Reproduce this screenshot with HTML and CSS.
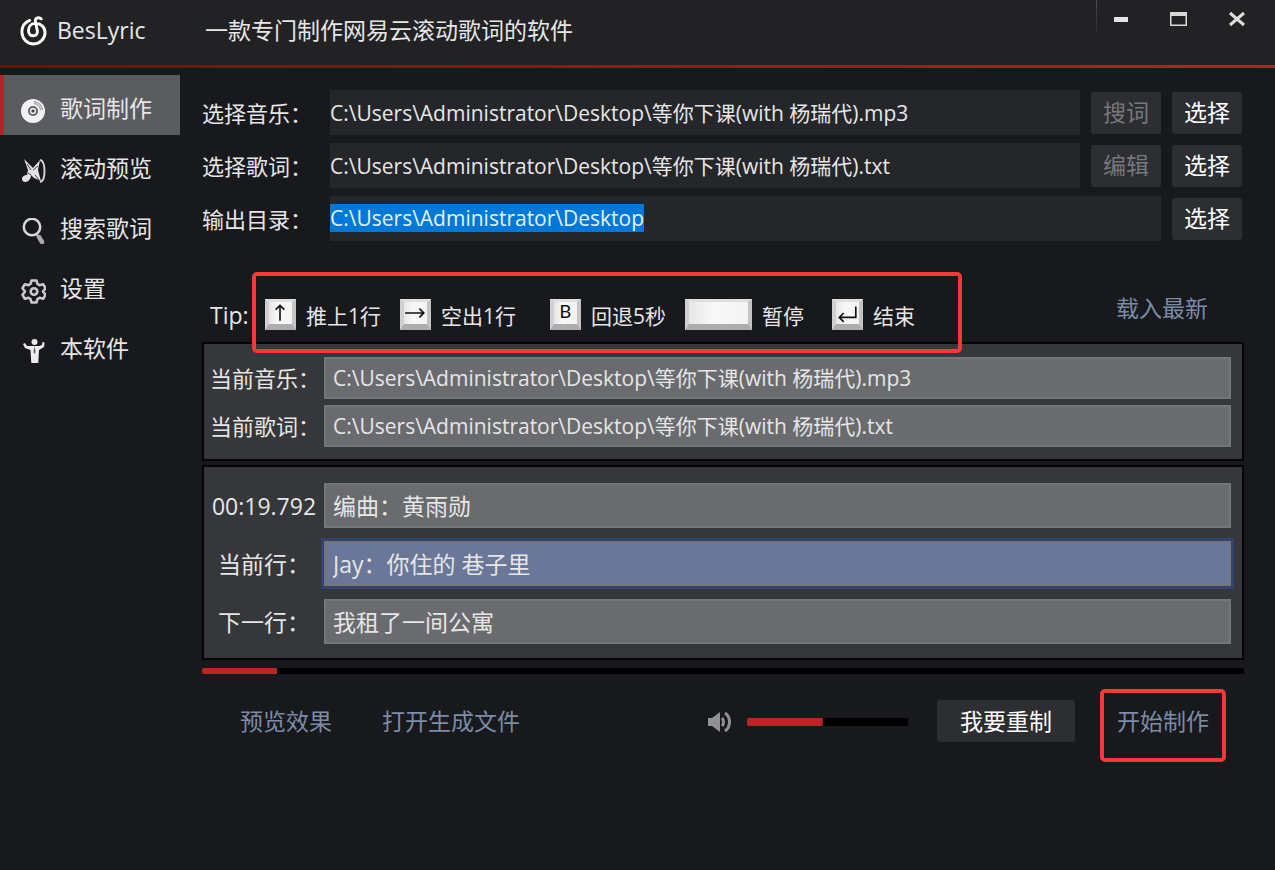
FILE: index.html
```html
<!DOCTYPE html>
<html lang="zh-CN">
<head>
    <meta charset="UTF-8">
    <meta name="viewport" content="width=device-width, initial-scale=1.0">
    <title>BesLyric</title>
    <link rel="stylesheet" href="styles.css">
</head>
<body>
    <header class="titlebar">
        <svg class="logo" viewBox="0 0 28 32" fill="none" stroke="#fff" stroke-width="3" stroke-linecap="round">
            <path d="M10 5.500C5 7.500 2 12 2 17.500C2 24.500 7.500 30 14 30S26 24.500 26 18C26 12.500 21.500 8.500 16 8.500C11.500 8.500 8.800 12 8.800 16C8.800 19.500 11 21.500 13.700 21.500C16.500 21.500 18.500 19.500 18 16.500L16 6.500C15.500 3.500 18.500 1.500 22 4"/>
        </svg>
        <h1>BesLyric</h1>
        <p class="slogan">一款专门制作网易云滚动歌词的软件</p>
        <div class="window-buttons">
            <button aria-label="最小化"><svg viewBox="0 0 18 18"><path d="M2 7h14v5H2z" fill="#e4e4e4"/></svg></button>
            <button aria-label="最大化"><svg viewBox="0 0 18 18"><path d="M0 2h17v14H0zM1.500 6v8.500h14V6z" fill="#d8d8d8" fill-rule="evenodd"/></svg></button>
            <button aria-label="关闭"><svg viewBox="0 0 18 18"><path d="M2 3l14 12M16 3L2 15" stroke="#dcdcdc" stroke-width="3"/></svg></button>
        </div>
    </header>

    <div class="layout">
        <nav class="sidebar">
            <a href="#make" class="active">
                <svg viewBox="0 0 26 26"><circle cx="13" cy="13" r="12" fill="#f1f1f1"/><circle cx="13" cy="13" r="5" fill="#5b5c5f"/><circle cx="13" cy="13" r="3.200" fill="#e4e4e4"/><circle cx="13" cy="13" r="1.600" fill="#444"/><path d="M14 5.500a7.500 7.500 0 0 1 6.500 6.500M14 3.500a9.500 9.500 0 0 1 8.500 8.500" fill="none" stroke="#858689"/></svg>
                <span>歌词制作</span>
            </a>
            <a href="#preview">
                <svg viewBox="0 0 26 26"><path d="M4 1l6 6 3 3 7-8-2 10 3 11-7-3-3-3c0 8-9 9-9 4 0-3 3-4 5-4l1-5z" fill="#e2e2e2"/><path d="M20 2c6 1 6 21 0 22" fill="none" stroke="#d0d0d0" stroke-width="2"/><path d="M7 6l4 6M18 8l-5 4M15 17l4 5M8 15l3 2" stroke="#404145"/></svg>
                <span>滚动预览</span>
            </a>
            <a href="#search">
                <svg viewBox="0 0 26 26" fill="none" stroke-linecap="round"><circle cx="12" cy="9" r="8.200" stroke="#d8d8d8" stroke-width="2.500"/><path d="M16 16l2 2" stroke="#ccc" stroke-width="2"/><path d="M19 19l3 5" stroke="#aaa" stroke-width="4.500"/></svg>
                <span>搜索歌词</span>
            </a>
            <a href="#settings">
                <svg viewBox="0 0 26 26" fill="none" stroke="#c9cacc" stroke-width="2.600" stroke-linejoin="round"><path d="M11.500 2.500h5l1 3.500 2 1.200 3.600-1 2.400 4-2.500 3.300 2.500 3.300-2.400 4-3.600-1-2 1.200-1 3.500h-5l-1-3.500-2-1.200-3.600 1-2.400-4L5 13.500l-2.500-3.300 2.400-4 3.600 1 2-1.200z"/><circle cx="14" cy="13.500" r="3.300"/></svg>
                <span>设置</span>
            </a>
            <a href="#about">
                <svg viewBox="0 0 26 26" fill="#ececec"><circle cx="14.500" cy="4" r="3"/><path d="M10 8h9l3-1 .5-3 2 .5L24 9l-5 3-.7 13h-7L10.500 12 5 10 3 6l2-1 2 3z"/><path d="M14.500 8l-1 6 1 2 1-2z" fill="#55565a"/></svg>
                <span>本软件</span>
            </a>
        </nav>

        <main>
            <form class="files">
                <div class="file-row">
                    <label for="music">选择音乐：</label>
                    <input type="text" id="music" value="C:\Users\Administrator\Desktop\等你下课(with 杨瑞代).mp3">
                    <button type="button" disabled>搜词</button>
                    <button type="button">选择</button>
                </div>
                <div class="file-row">
                    <label for="lyric">选择歌词：</label>
                    <input type="text" id="lyric" value="C:\Users\Administrator\Desktop\等你下课(with 杨瑞代).txt">
                    <button type="button" disabled>编辑</button>
                    <button type="button">选择</button>
                </div>
                <div class="file-row">
                    <label for="output">输出目录：</label>
                    <input type="text" id="output" value="C:\Users\Administrator\Desktop">
                    <button type="button">选择</button>
                </div>
            </form>

            <div class="tips">
                <span class="tip-title">Tip:</span>
                <div class="keys">
                    <kbd><svg viewBox="0 0 20 20"><path d="M10 17V3M6 7l4-4 4 4"/></svg></kbd><span>推上1行</span>
                    <kbd><svg viewBox="0 0 20 20"><path d="M1 10h17M14 6l4 4-4 4"/></svg></kbd><span class="wide">空出1行</span>
                    <kbd>B</kbd><span>回退5秒</span>
                    <kbd class="space"></kbd><span class="medium">暂停</span>
                    <kbd><svg viewBox="0 0 20 20"><path d="M18 4v10H3M7 10l-4 4 4 4"/></svg></kbd><span>结束</span>
                </div>
                <a href="#latest" class="load-latest">载入最新</a>
            </div>

            <section class="panel current-files">
                <label for="curMusic">当前音乐：</label>
                <input type="text" id="curMusic" value="C:\Users\Administrator\Desktop\等你下课(with 杨瑞代).mp3" readonly>
                <label for="curLyric">当前歌词：</label>
                <input type="text" id="curLyric" value="C:\Users\Administrator\Desktop\等你下课(with 杨瑞代).txt" readonly>
            </section>

            <section class="panel lines">
                <label for="lastLine">00:19.792</label>
                <input type="text" id="lastLine" value="编曲：黄雨勋" readonly>
                <label for="curLine">当前行：</label>
                <input type="text" id="curLine" class="current" value="Jay：你住的 巷子里" readonly>
                <label for="nextLine">下一行：</label>
                <input type="text" id="nextLine" value="我租了一间公寓" readonly>
            </section>

            <input type="range" class="slider progress" aria-label="播放进度" min="0" max="1000" value="72" style="--value: 7.2%">

            <div class="controls">
                <a href="#effect">预览效果</a>
                <a href="#open">打开生成文件</a>
                <div class="volume">
                    <svg viewBox="0 0 26 22"><path d="M1 7h4l8-6v20l-8-6H1z" fill="#909193"/><path d="M15 7c2 2 2 6 0 8M18 2c6 4 6 14 0 18" fill="none" stroke="#909193" stroke-width="3"/></svg>
                    <input type="range" class="slider" aria-label="音量" min="0" max="100" value="47" style="--value: 47%">
                </div>
                <button type="button">我要重制</button>
                <a href="#start" class="start">开始制作</a>
            </div>
        </main>
    </div>

    <script>
        const output = document.getElementById('output');
        output.focus();
        output.select();

        document.querySelectorAll('.slider').forEach(function (slider) {
            slider.addEventListener('input', function () {
                slider.style.setProperty('--value', slider.value / slider.max * 100 + '%');
            });
        });
    </script>
</body>
</html>
```
FILE: styles.css
```css
* {
    box-sizing: border-box;
    margin: 0;
    padding: 0;
}
body {
    min-height: 100vh;
    background: #18191d;
    color: #e6e6e6;
    font-family: "Open Sans", "Noto Sans CJK SC", sans-serif;
    font-size: 23px;
    line-height: 30px;
}
a {
    color: inherit;
    text-decoration: none;
}
button, input {
    font: inherit;
    color: inherit;
    border: none;
    outline: none;
}
label {
    white-space: nowrap;
}

/* title bar */
.titlebar {
    display: flex;
    align-items: center;
    height: 68px;
    padding: 0 20px 8px;
    background: linear-gradient(90deg, #79090d, #b82226) bottom / 100% 3px no-repeat #222224;
}
.logo {
    width: 27px;
    height: 31px;
}
h1 {
    width: 148px;
    margin-left: 10px;
    font-size: 23px;
    font-weight: normal;
}
.window-buttons {
    display: flex;
    align-self: flex-start;
    gap: 40px;
    height: 38px;
    margin-left: auto;
    padding: 0 9px 0 15px;
    border-left: 1px solid;
    border-image: linear-gradient(#505052, #222224) 1;
}
.window-buttons button {
    width: 18px;
    height: 38px;
    padding: 0;
    background: none;
}
.window-buttons svg {
    display: block;
    width: 18px;
    height: 18px;
}

.layout {
    display: flex;
}

/* sidebar */
.sidebar {
    width: 180px;
    padding-top: 7px;
}
.sidebar a {
    display: flex;
    align-items: center;
    gap: 14px;
    height: 60px;
    padding: 5px 0 0 16px;
    border-left: 4px solid transparent;
}
.sidebar a.active {
    background: #5b5c5f;
    border-left-color: #b82226;
}
.sidebar svg {
    width: 26px;
    height: 26px;
    margin-top: 6px;
}

/* main column */
main {
    flex: 1;
    padding: 22px 31px 0 22px;
}
.files {
    display: flex;
    flex-direction: column;
    gap: 8px;
    padding-right: 2px;
}
.file-row {
    display: flex;
    align-items: center;
}
.file-row label {
    width: 128px;
    font-size: 22px;
}
.file-row input {
    flex: 1;
    height: 45px;
    min-width: 0;
    padding-bottom: 2px;
    background: #25262a;
    font-size: 21px;
}
.file-row button {
    width: 70px;
    margin-left: 11px;
}
.file-row input::selection {
    background: #0078d7;
    color: #e6f2ff;
}
button {
    height: 42px;
    padding-bottom: 2px;
    background: #2d2e32;
    border-radius: 3px;
    color: #fff;
}
button:disabled {
    color: #77787a;
}

/* keyboard tips */
.tips {
    position: relative;
    display: flex;
    align-items: center;
    height: 101px;
    padding: 48px 36px 2px 8px;
}
.tip-title {
    width: 55px;
}
.keys {
    display: flex;
    align-items: center;
    font-size: 21px;
}
.keys::before {
    content: "";
    position: absolute;
    left: 50px;
    top: 31px;
    box-sizing: border-box;
    width: 710px;
    height: 81px;
    border: 4px solid #fb3838;
    border-radius: 5px;
}
.keys span {
    margin: 2px 19px 0 10px;
}
.keys .wide {
    margin-right: 34px;
}
.keys .medium {
    margin-right: 28px;
}
kbd {
    width: 31px;
    height: 31px;
    border: 4px solid;
    border-width: 3px 4px 6px;
    border-color: #dedede #c4c4c4 #adadad #d0d0d0;
    background: linear-gradient(90deg, #e6e6e6, #f8f8f8 40%, #f3f3f3);
    color: #111;
    font: 19px/20px Roboto, sans-serif;
    text-align: center;
}
kbd.space {
    width: 67px;
}
kbd svg {
    display: block;
    width: 22px;
    height: 22px;
    fill: none;
    stroke: #111;
    stroke-width: 1.5;
}
.load-latest {
    margin: 0 0 14px auto;
    color: #7b8ca8;
}

/* panels */
.panel {
    display: grid;
    grid-template-columns: 114px 1fr;
    align-items: center;
    margin-bottom: 4px;
    padding: 13px 11px 12px 6px;
    border: 2px solid #050506;
    background: #36373a;
}
.panel input {
    width: 100%;
    height: 42px;
    padding: 0 0 2px 7px;
    border: 2px solid #757678;
    background: #6a6b6e;
}
.current-files {
    row-gap: 6px;
}
.current-files label {
    font-size: 22px;
}
.current-files input {
    font-size: 21px;
}
.lines {
    row-gap: 13px;
    padding: 16px 11px 14px 6px;
}
.lines label {
    width: 108px;
    text-align: center;
}
.lines input {
    height: 45px;
}
.lines input.current {
    background: #6a7798;
    box-shadow: 0 0 0 3px #344272;
}

/* sliders */
.slider {
    appearance: none;
    display: block;
    height: 8px;
    border-radius: 2px;
    background: linear-gradient(#b82626, #b82626) 0 0 / var(--value) 100% no-repeat #000;
}
.slider::-webkit-slider-thumb {
    appearance: none;
    width: 1px;
    height: 8px;
}
.progress {
    width: 100%;
    height: 6px;
    margin-top: 8px;
}

/* bottom bar */
.controls {
    display: flex;
    align-items: flex-start;
    margin-top: 26px;
    padding: 0 18px 0 38px;
    line-height: 42px;
}
.controls a {
    margin-right: 50px;
    color: #7b8ca8;
}
.volume {
    display: flex;
    align-items: center;
    gap: 14px;
    height: 44px;
    margin: 0 29px 0 auto;
}
.volume svg {
    width: 26px;
    height: 22px;
}
.volume .slider {
    width: 161px;
}
.controls button {
    width: 138px;
    margin-right: 25px;
}
.controls .start {
    height: 73px;
    margin: -11px 0 0;
    padding: 7px 13px;
    border: 4px solid #fb3838;
    border-radius: 5px;
}
```
